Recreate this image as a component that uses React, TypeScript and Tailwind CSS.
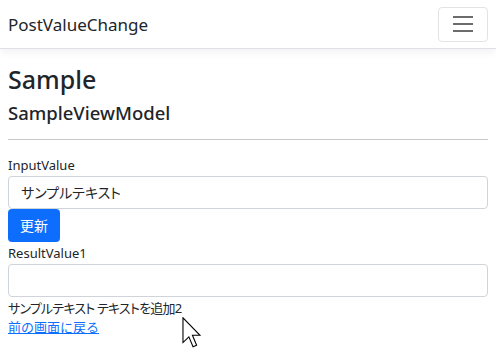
import React from "react";

const FONT = {
  fontFamily: '"Noto Sans", "Noto Sans CJK JP", sans-serif',
};

function Cursor() {
  return (
    <svg
      width="19"
      height="31"
      viewBox="0 0 12 20"
      className="pointer-events-none absolute left-[182px] top-[317px]"
    >
      <path
        d="M0.5 0.5 L0.5 16.5 L4.3 12.8 L7 19.2 L9.3 18.2 L6.6 11.8 L11.5 11.8 Z"
        fill="#fff"
        stroke="#000"
        strokeWidth="0.7"
        strokeLinejoin="miter"
      />
    </svg>
  );
}

export default function App() {
  return (
    <div
      className="relative h-[361px] w-[496px] overflow-hidden bg-white text-[14px] text-[#212529]"
      style={FONT}
    >
      <header className="flex h-[49px] items-center justify-between border-b border-[#dee2e6] bg-white px-2 shadow-[0_4px_8px_rgba(0,0,0,0.05)]">
        <span className="text-[17px] leading-none text-[#212529]">PostValueChange</span>
        <button className="flex h-[35px] w-[50px] flex-col items-center justify-center gap-[5px] rounded-[4px] border border-[#e3e3e3]">
          <span className="block h-[2px] w-[20px] bg-[#6c6c6c]" />
          <span className="block h-[2px] w-[20px] bg-[#6c6c6c]" />
          <span className="block h-[2px] w-[20px] bg-[#6c6c6c]" />
        </button>
      </header>

      <main className="px-2 pt-[15px]">
        <h1 className="text-[25px] font-medium leading-[1.2]">Sample</h1>
        <h5 className="mt-[8px] text-[18.5px] font-medium leading-[1.2]">SampleViewModel</h5>
        <hr className="mt-[15px] border-t border-[#c8c8c8]" />

        <div className="mt-[15px]">
          <label className="block leading-[21px] text-[13px]">InputValue</label>
          <div className="flex h-[33px] items-center rounded-[4px] border border-[#ced4da] px-3 text-[14px] [font-feature-settings:'palt']">
            サンプルテキスト
          </div>
          <button className="block h-[33px] rounded-[4px] bg-[#0d6efd] px-3 text-[14px] text-white">
            更新
          </button>
        </div>

        <div className="mt-[1px]">
          <label className="block leading-[21px] text-[13px]">ResultValue1</label>
          <div className="h-[33px] rounded-[4px] border border-[#ced4da]" />
          <div className="mt-[1px] leading-[20px] text-[13px] tracking-[-0.8px] [font-feature-settings:'palt']">
            サンプルテキスト テキストを追加2
          </div>
          <a href="#" className="block leading-[18px] text-[13px] text-[#0d6efd] underline">
            前の画面に戻る
          </a>
        </div>
      </main>

      <Cursor />
    </div>
  );
}
